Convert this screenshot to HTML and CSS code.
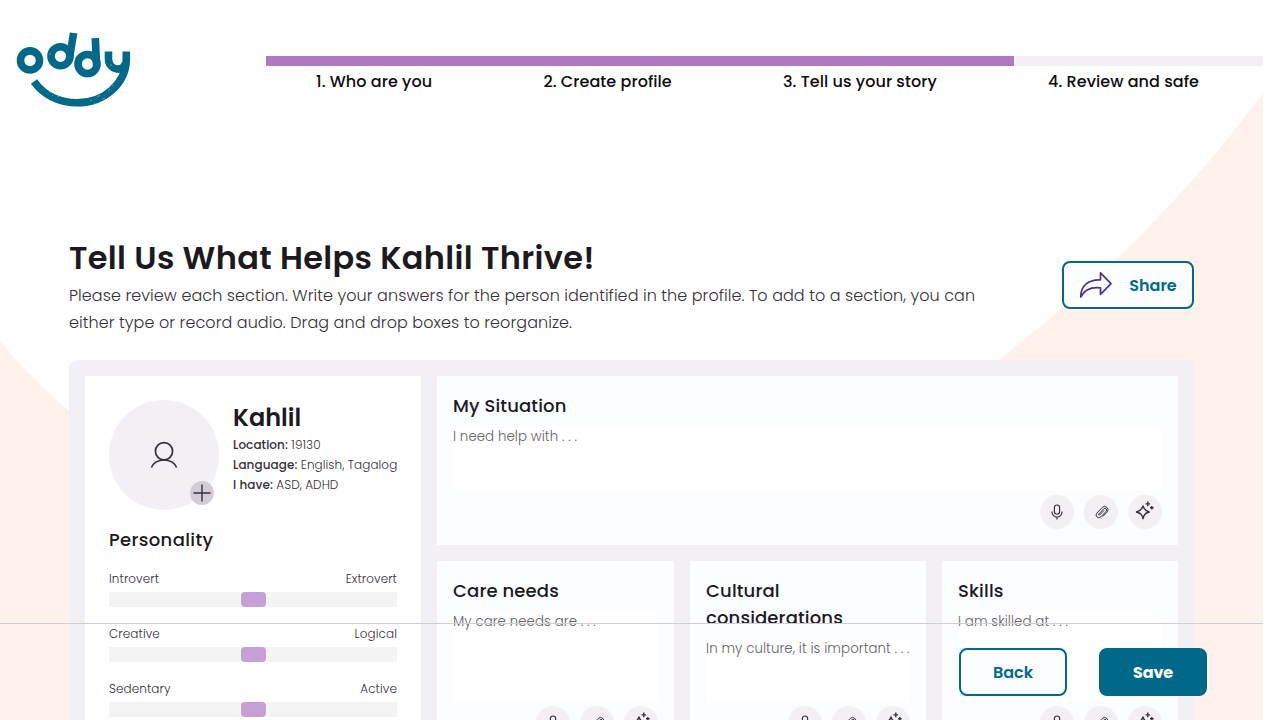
FILE: index.html
```html
<!DOCTYPE html>
<html lang="en">
<head>
<meta charset="utf-8">
<title>Oddy – Tell us your story</title>
<link rel="stylesheet" href="styles.css">
</head>
<body>
<svg class="defs" width="0" height="0" aria-hidden="true">
  <symbol id="mic" viewBox="0 0 16 16">
    <rect x="5.4" y="1" width="5.2" height="9.2" rx="2.6"/>
    <path d="M3 7.4v.6a5 5 0 0 0 10 0v-.6M8 13v2.4"/>
  </symbol>
  <symbol id="clip" viewBox="0 0 16 16">
    <path d="M10.800 5.600 6 10.700a.7.7 0 0 1-1-1l5.300-5.600a1.800 1.800 0 0 1 2.600 2.600l-5.600 6a2.900 2.900 0 0 1-4.200-4.100l5.700-6a3.500 3.500 0 0 1 5 5L9.300 12.300"/>
  </symbol>
  <symbol id="spark" viewBox="0 0 20 20">
    <path d="M8 5c.9 3.300 2.100 4.700 6.200 6-4 1.200-5.300 2.500-6.200 6.700-1-4.200-2.200-5.500-6.600-6.700 4.400-1.300 5.600-2.700 6.600-6z"/>
    <path d="M12.800.6v4.600M10.500 2.900h4.600M16.800 5v3.600M15 6.800h3.600"/>
  </symbol>
</svg>
<div class="page">
  <svg class="backdrop" viewBox="0 0 1263 720" aria-hidden="true">
    <path d="M1263 93Q1152 243 998 360V720H1263Z"/>
    <path d="M0 341Q33 381 69 411L200 500V720H0Z"/>
  </svg>

  <header class="header">
    <svg class="logo" viewBox="0 0 116 78" role="img" aria-label="oddy">
      <circle cx="14" cy="29.400" r="9.500"/>
      <circle cx="44.500" cy="25.200" r="9.500"/>
      <path d="M57.600 2 53.500 27"/>
      <circle cx="71.500" cy="33" r="9.500"/>
      <path d="M79.300 7.200 80.500 34"/>
      <path d="M92.500 20.500V28C92.500 39 107 42 109.500 32"/>
      <path d="M110.300 20.500V29C109.500 53 88 71.800 61.500 71.800C42 71.800 27 63 18 50.500"/>
      <path class="speck" d="M33 60.500l2 1M36 64l1 1M38 59.500l1.500 1M41 65l2 .5M74 70l2-1M78 73l1-.5M81 66l3-1.500M86 68l3-1M92 60l2-2M96 55l1.500-1.500M34 22v2M95 33v2"/>
    </svg>
    <nav class="steps">
      <div class="bar"><div class="bar-fill"></div></div>
      <ol class="step-list">
        <li>1. Who are you</li><li>2. Create profile</li><li>3. Tell us your story</li><li>4. Review and safe</li>
      </ol>
    </nav>
  </header>

  <main class="main">
    <section class="intro">
      <div class="intro-text">
        <h1>Tell Us What Helps Kahlil Thrive!</h1>
        <p>Please review each section. Write your answers for the person identified in the profile. To add to a section, you can<br>either type or record audio. Drag and drop boxes to reorganize.</p>
      </div>
      <button class="btn share">
        <svg width="34" height="28" viewBox="0 0 34 28"><path d="M21.500 1.800 32 12.700 21.500 23.300V16.800C12 16 5 19 1.800 26 1.500 15 9 8.400 21.500 8.800Z"/></svg>
        <span>Share</span>
      </button>
    </section>

    <section class="board">
      <aside class="profile">
        <div class="person">
          <div class="avatar">
            <svg width="28" height="28" viewBox="0 0 28 28"><circle cx="14" cy="10.200" r="8.600"/><path d="M1.400 26.500C6 16.500 22 16.500 26.600 26.500"/></svg>
            <span class="add"><svg width="18" height="18" viewBox="0 0 18 18"><path d="M9 .5v17M.5 9h17"/></svg></span>
          </div>
          <div class="facts">
            <h2>Kahlil</h2>
            <p><b>Location:</b> 19130</p>
            <p><b>Language:</b> English, Tagalog</p>
            <p><b>I have:</b> ASD, ADHD</p>
          </div>
        </div>
        <h3>Personality</h3>
        <div class="trait"><div class="ends"><span>Introvert</span><span>Extrovert</span></div><div class="track"><i></i></div></div>
        <div class="trait"><div class="ends"><span>Creative</span><span>Logical</span></div><div class="track"><i></i></div></div>
        <div class="trait"><div class="ends"><span>Sedentary</span><span>Active</span></div><div class="track"><i></i></div></div>
      </aside>

      <div class="cards">
        <article class="card wide">
          <h3>My Situation</h3>
          <div class="field">I need help with . . .</div>
          <div class="tools"><span><svg class="i-mic"><use href="#mic"/></svg></span><span><svg class="i-clip"><use href="#clip"/></svg></span><span><svg class="i-spark"><use href="#spark"/></svg></span></div>
        </article>
        <article class="card">
          <h3>Care needs</h3>
          <div class="field">My care needs are . . .</div>
          <div class="tools"><span><svg class="i-mic"><use href="#mic"/></svg></span><span><svg class="i-clip"><use href="#clip"/></svg></span><span><svg class="i-spark"><use href="#spark"/></svg></span></div>
        </article>
        <article class="card">
          <h3>Cultural considerations</h3>
          <div class="field">In my culture, it is important . . .</div>
          <div class="tools"><span><svg class="i-mic"><use href="#mic"/></svg></span><span><svg class="i-clip"><use href="#clip"/></svg></span><span><svg class="i-spark"><use href="#spark"/></svg></span></div>
        </article>
        <article class="card">
          <h3>Skills</h3>
          <div class="field">I am skilled at . . .</div>
          <div class="tools"><span><svg class="i-mic"><use href="#mic"/></svg></span><span><svg class="i-clip"><use href="#clip"/></svg></span><span><svg class="i-spark"><use href="#spark"/></svg></span></div>
        </article>
      </div>
    </section>
  </main>

  <footer class="footer">
    <button class="btn back">Back</button>
    <button class="btn save">Save</button>
  </footer>
</div>
</body>
</html>
```

FILE: styles.css
```css
* { box-sizing: border-box; margin: 0; padding: 0; }

body {
  background: #fff;
  font-family: Poppins, Inter, sans-serif;
  color: #1c1a1f;
  overflow: hidden;
}

svg { fill: none; stroke: #36313a; display: block; }
.defs { position: absolute; }

.page {
  position: relative;
  width: 1263px;
  height: 720px;
  overflow: hidden;
}

.backdrop { position: absolute; inset: 0; width: 1263px; height: 720px; z-index: -1; }
.backdrop path { fill: #fff1ec; stroke: none; }

.header { display: flex; height: 240px; padding-left: 16px; }
.logo { width: 116px; height: 78px; margin-top: 31px; stroke: #006989; stroke-width: 7.6; }
.logo .speck { stroke: #7fb4c4; stroke-width: .7; }

.steps { width: 997px; margin: 56px 0 0 134px; }
.bar { height: 10px; background: #f2f0f4; }
.bar-fill { width: 75%; height: 100%; background: #ad79c3; }
.step-list {
  display: flex;
  list-style: none;
  gap: 111.200px;
  padding: 4px 0 0 50px;
  font-size: 16px;
  font-weight: 500;
  line-height: 24px;
  letter-spacing: .065px;
  white-space: nowrap;
  color: #0e0c10;
}

.main { padding: 0 69px; }
.intro { display: flex; justify-content: space-between; height: 120px; }
.intro-text { white-space: nowrap; }
h1 { font-size: 32px; font-weight: 600; line-height: 36px; letter-spacing: .33px; padding-bottom: 6px; }
.intro p { font-size: 16px; font-weight: 300; line-height: 27px; letter-spacing: .065px; color: #36313a; }

.btn {
  display: flex;
  align-items: center;
  justify-content: center;
  height: 48px;
  padding-top: 2px;
  border: 2px solid #006989;
  border-radius: 8px;
  background: #fbfdff;
  color: #006989;
  font: 600 16px/24px Poppins, Inter, sans-serif;
}
.share { width: 132px; margin-top: 21px; gap: 16px; }
.share svg { margin-top: -2px; stroke: #4b3391; stroke-width: 1.7; stroke-linejoin: round; }

.board {
  display: flex;
  gap: 16px;
  padding: 16px;
  background: #f2f0f4;
  border-radius: 8px 8px 0 0;
}
.profile { width: 336px; padding: 24px; background: #fff; }
.person { display: flex; gap: 14px; height: 126px; }
.avatar {
  position: relative;
  flex: none;
  display: flex;
  align-items: center;
  justify-content: center;
  width: 110px;
  height: 110px;
  border-radius: 50%;
  background: #f2f0f4;
}
.avatar svg { stroke-width: 1.7; }
.add {
  position: absolute;
  right: 5px;
  bottom: 5px;
  display: flex;
  align-items: center;
  justify-content: center;
  width: 24px;
  height: 24px;
  border-radius: 50%;
  background: #d2ccd6;
}
.avatar .add svg { stroke-width: 1.4; }
h2 { font-size: 24px; font-weight: 600; line-height: 35px; }
.facts { white-space: nowrap; }
.facts p { font-size: 12px; font-weight: 300; line-height: 20px; letter-spacing: .07px; color: #36313a; }
.facts b { font-weight: 500; }

h3 { font-size: 18px; font-weight: 500; line-height: 27px; letter-spacing: .14px; }

.profile h3 { margin-bottom: 17px; letter-spacing: .36px; }
.trait { height: 55px; }
.ends {
  display: flex;
  justify-content: space-between;
  height: 22px;
  font-size: 12px;
  font-weight: 300;
  line-height: 18px;
  letter-spacing: .09px;
  color: #36313a;
}
.track { display: flex; justify-content: center; height: 15px; background: #f4f4f4; }
.track i { width: 25px; height: 15px; border-radius: 4px; background: #c5a0d5; }

.cards {
  flex: 1;
  display: grid;
  grid-template-columns: 237px 236px 236px;
  grid-template-rows: 169px 195px;
  gap: 16px;
}
.card { display: flex; flex-direction: column; min-width: 0; padding: 16px; background: #fbfdff; }
.wide { grid-column: 1 / -1; }
.field {
  flex: 1;
  margin: 8px 0 4px;
  background: #fff;
  font-size: 13.330px;
  font-weight: 300;
  line-height: 20px;
  letter-spacing: .08px;
  white-space: nowrap;
  color: #66636a;
}
.tools { display: flex; justify-content: flex-end; gap: 10px; }
.tools span {
  display: flex;
  align-items: center;
  justify-content: center;
  width: 34px;
  height: 34px;
  border-radius: 50%;
  background: #f2f0f4;
}
.i-mic { width: 16px; height: 16px; stroke-width: 1.15; }
.i-clip { width: 15px; height: 15px; stroke-width: 1.05; }
.i-spark { width: 20px; height: 20px; stroke-width: 1.4; stroke-linejoin: round; }
.tools .i-spark { margin: 0 1px 3px 0; }

.footer {
  position: absolute;
  left: 0;
  right: 0;
  top: 623px;
  height: 97px;
  display: flex;
  justify-content: flex-end;
  gap: 32px;
  padding: 24px 56px 0 0;
  border-top: 1px solid #cfcfd1;
}
.back, .save { width: 108px; }
.save { background: #006989; color: #fff; font-weight: 700; letter-spacing: -.1px; }
```
